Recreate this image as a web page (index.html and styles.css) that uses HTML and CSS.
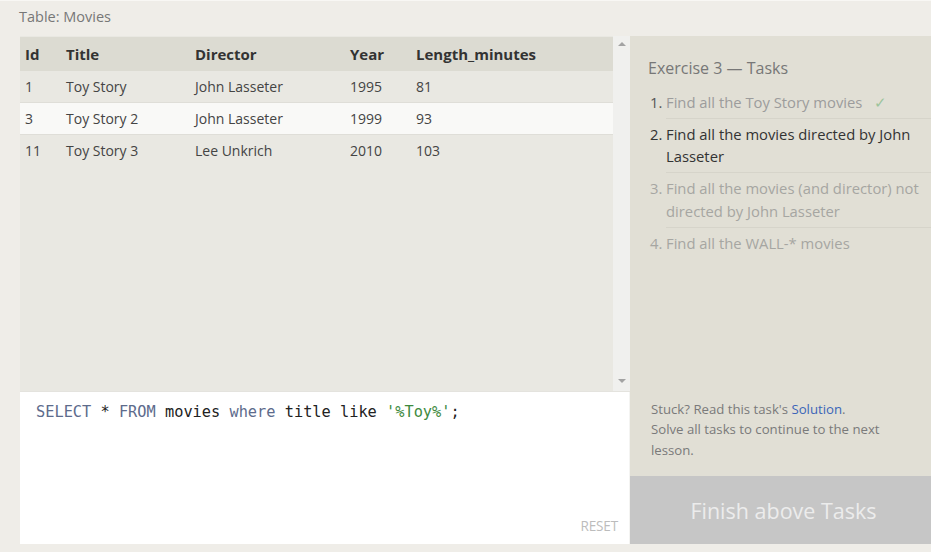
FILE: index.html
```html
<!DOCTYPE html>
<html>
<head>
<meta charset="utf-8">
<link rel="stylesheet" href="styles.css">
</head>
<body>
<div class="page">
  <div class="caption">Table: Movies</div>
  <div class="main">
    <div class="left">
      <div class="tablearea">
        <div class="tablewrap">
          <table class="grid">
            <thead>
              <tr><th class="c1">Id</th><th class="c2">Title</th><th class="c3">Director</th><th class="c4">Year</th><th class="c5">Length_minutes</th></tr>
            </thead>
            <tbody>
              <tr><td>1</td><td>Toy Story</td><td>John Lasseter</td><td>1995</td><td>81</td></tr>
              <tr class="hl"><td>3</td><td>Toy Story 2</td><td>John Lasseter</td><td>1999</td><td>93</td></tr>
              <tr class="lastrow"><td>11</td><td>Toy Story 3</td><td>Lee Unkrich</td><td>2010</td><td>103</td></tr>
            </tbody>
          </table>
        </div>
        <div class="scrollbar">
          <span class="arrow up"></span>
          <span class="arrow down"></span>
        </div>
      </div>
      <div class="editor">
        <div class="code"><span class="kw">SELECT</span> * <span class="kw">FROM</span> movies <span class="kw">where</span> title like <span class="str">'%Toy%'</span>;</div>
        <div class="reset">RESET</div>
      </div>
    </div>
    <div class="right">
      <div class="tasks">
        <div class="heading">Exercise 3 — Tasks</div>
        <ol class="list">
          <li class="done"><span class="num">1.</span><span class="txt">Find all the Toy Story movies <span class="check">✓</span></span></li>
          <li class="active"><span class="num">2.</span><span class="txt">Find all the movies directed by John Lasseter</span></li>
          <li class="todo"><span class="num">3.</span><span class="txt">Find all the movies (and director) not directed by John Lasseter</span></li>
          <li class="todo last"><span class="num">4.</span><span class="txt">Find all the WALL-* movies</span></li>
        </ol>
        <div class="help">Stuck? Read this task's <a class="link">Solution</a>.<br>Solve all tasks to continue to the next lesson.</div>
      </div>
      <div class="finish">Finish above Tasks</div>
    </div>
  </div>
</div>
</body>
</html>
```

FILE: styles.css
```css
html, body {
  margin: 0;
  padding: 0;
}
body {
  background: #efede8;
  font-family: "Open Sans", "Noto Sans", sans-serif;
  color: #333;
  width: 931px;
  height: 552px;
  overflow: hidden;
  border-top: 1px solid #f8f7f4;
  box-sizing: border-box;
}
.page {
  display: flex;
  flex-direction: column;
  height: 551px;
}
.caption {
  height: 35px;
  line-height: 31px;
  padding-left: 19px;
  font-size: 14.5px;
  color: #777;
}
.main {
  display: flex;
  height: 508px;
}
.left {
  width: 610px;
  margin-left: 20px;
  display: flex;
  flex-direction: column;
}
.tablearea {
  height: 355px;
  display: flex;
  background: #e9e8e2;
  border-bottom: 1px solid #e4e3de;
}
.tablewrap {
  flex: 1;
  padding-top: 1px;
}
.grid {
  border-collapse: separate;
  border-spacing: 0;
  width: 100%;
  font-size: 14px;
}
.grid th {
  background: #dcdbd2;
  text-align: left;
  font-weight: 700;
  font-size: 15px;
  color: #333;
  height: 34px;
  padding: 0;
}
.grid td {
  height: 31px;
  padding: 0;
  color: #444;
  border-bottom: 1px solid #dfded8;
}
.grid tr.lastrow td { border-bottom: none; }
.grid tr td:first-child, .grid tr th:first-child { padding-left: 5px; }
.grid .c1 { width: 41px; }
.grid .c2 { width: 129px; }
.grid .c3 { width: 155px; }
.grid .c4 { width: 66px; }
.grid tr.hl td { background: #f9f9f7; }
.scrollbar {
  width: 17px;
  background: #f0f0ee;
  display: flex;
  flex-direction: column;
  justify-content: space-between;
  align-items: center;
  padding: 6px 0 8px;
  box-sizing: border-box;
}
.arrow {
  width: 0;
  height: 0;
  border-left: 4px solid transparent;
  border-right: 4px solid transparent;
}
.arrow.up { border-bottom: 4px solid #a3a3a3; }
.arrow.down { border-top: 4px solid #a3a3a3; }
.editor {
  flex: 1;
  background: #fff;
  display: flex;
  flex-direction: column;
  justify-content: space-between;
  padding: 10px 11px 8px 16px;
  box-sizing: border-box;
  border-right: 1px solid #f4f4f2;
}
.code {
  font-family: "DejaVu Sans Mono", "Liberation Mono", monospace;
  font-size: 15.3px;
  line-height: 20px;
  color: #222;
}
.kw { color: #5d6b8c; }
.str { color: #3e8a3e; }
.reset {
  align-self: flex-end;
  font-size: 13.6px;
  color: #bcbcbc;
  line-height: 20px;
  letter-spacing: -0.2px;
}
.right {
  width: 301px;
  display: flex;
  flex-direction: column;
}
.tasks {
  flex: 1;
  background: #e1dfd5;
  padding: 20px 0 0 18px;
  display: flex;
  flex-direction: column;
}
.heading {
  font-size: 16px;
  color: #777;
  line-height: 24px;
  margin-bottom: 11px;
}
.list {
  list-style: none;
  margin: 0;
  padding: 0 0 0 2px;
  font-size: 14.8px;
  line-height: 22.7px;
}
.list li {
  display: flex;
  padding: 0 4px 5px 0;
  margin-bottom: 4px;
  position: relative;
}
.list li::after {
  content: "";
  position: absolute;
  left: 16px;
  right: 0;
  bottom: 0;
  border-bottom: 1px solid #d6d4ca;
}
.list li.last::after { display: none; }
.num { width: 16px; flex: none; }
.done .num { color: #555; }
.done .txt { color: #9c9c9c; }
.check { color: #9cc49c; margin-left: 8px; }
.active { color: #333; }
.todo { color: #a6a6a2; }
.help {
  margin-top: auto;
  margin-bottom: 16px;
  padding-left: 3px;
  width: 255px;
  font-size: 13.2px;
  line-height: 20.5px;
  color: #7a7a7a;
}
.link { color: #3b65b8; }
.finish {
  height: 68px;
  background: #c6c6c6;
  color: #ececec;
  font-size: 21.5px;
  display: flex;
  align-items: center;
  justify-content: center;
  padding-left: 6px;
}
```
